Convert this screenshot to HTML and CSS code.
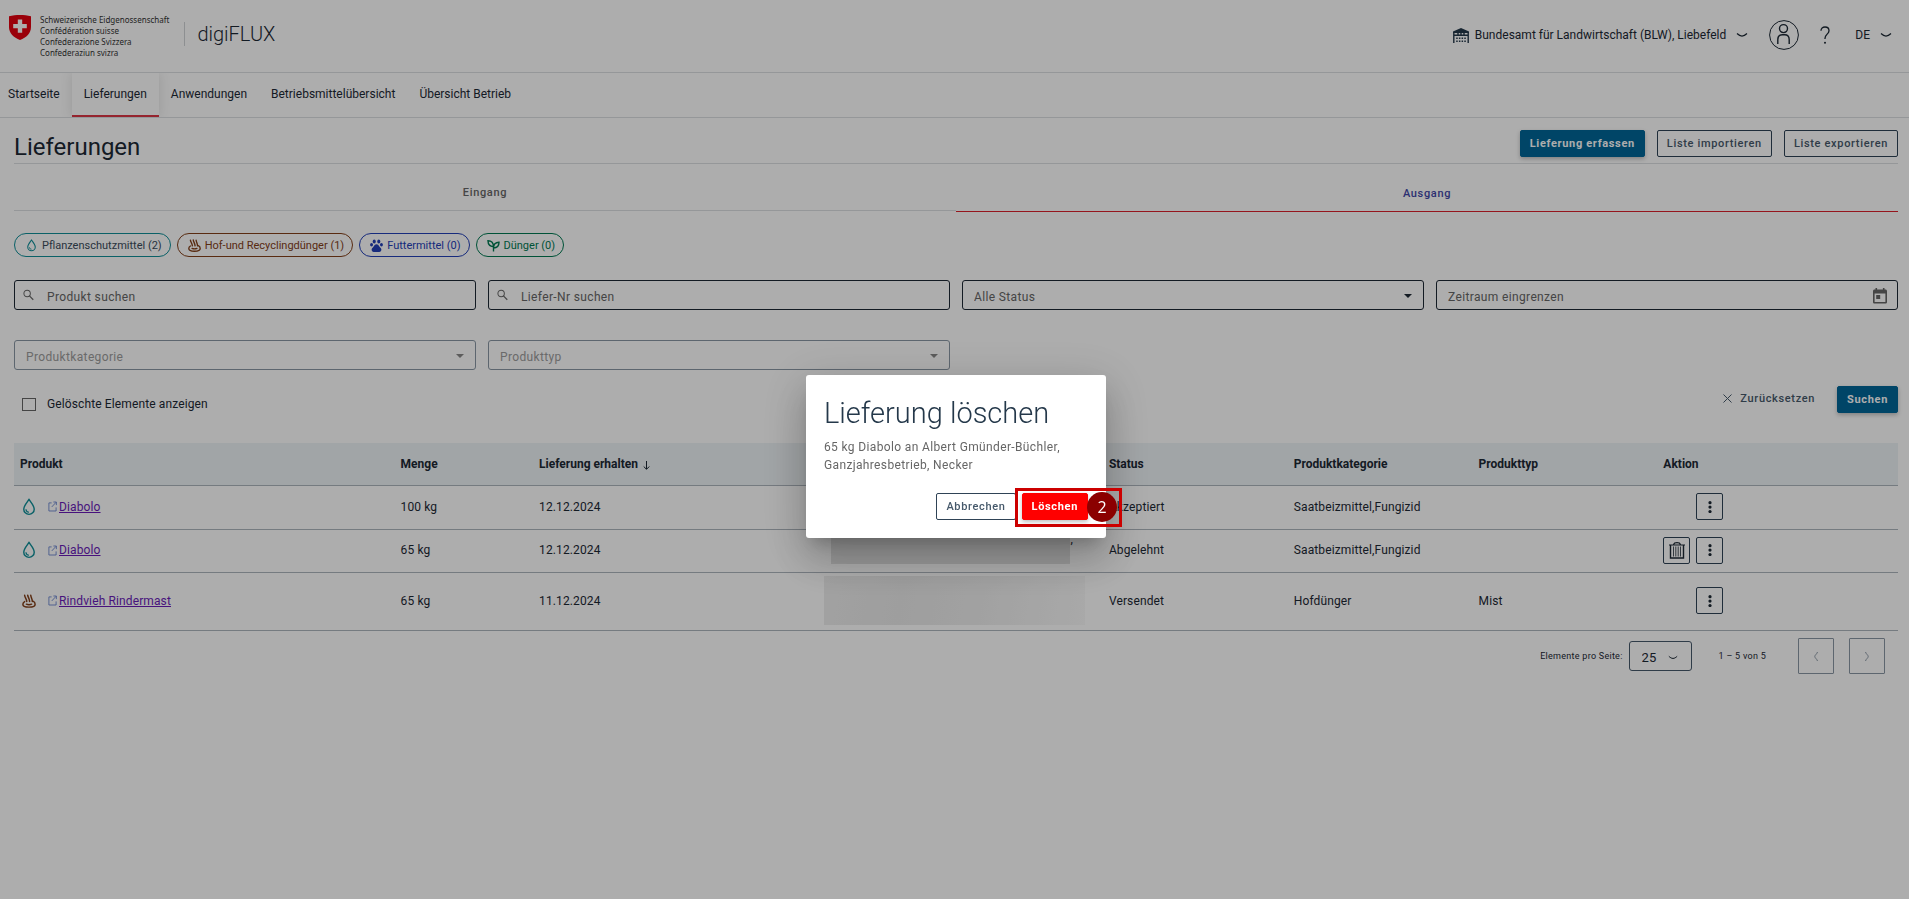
FILE: index.html
```html
<!DOCTYPE html>
<html lang="de">
<head>
<meta charset="utf-8">
<title>digiFLUX – Lieferungen</title>
<link rel="stylesheet" href="styles.css">
</head>
<body>
<svg class="defs" aria-hidden="true">
  <symbol id="drop" viewBox="0 0 16 20"><path d="M8 1.6C5.8 4.8 2.2 8.6 2.2 12.4a5.8 5.8 0 0 0 11.6 0C13.800 8.600 10.200 4.800 8 1.600z" fill="none" stroke="currentColor" stroke-width="1.600"/><path d="M4.600 12.600a3.400 3.400 0 0 0 3.400 3.200" fill="none" stroke="currentColor" stroke-width="1.300"/></symbol>
  <symbol id="manure" viewBox="0 0 16 16"><g fill="none" stroke="currentColor" stroke-width="1.700" stroke-linecap="round"><path d="M3 1.500c.2 2.400 2.200 3.600 2.400 7M6.500 1.300c.2 2.400 2 3.800 2.200 7.200M10 1.500c.2 2.400 1.600 3.600 1.800 7"/><path d="M3 8.600C1.600 9.400 1 10.600 1 11.600 1 14 3.600 15 8 15s7-1 7-3.400c0-1.600-.9-2.800-2.400-3.400"/><path d="M5 11.600c1.600.6 4.400.6 6 0"/></g></symbol>
  <symbol id="paw" viewBox="0 0 16 16"><g fill="currentColor"><ellipse cx="5.200" cy="3" rx="1.900" ry="2.500"/><ellipse cx="10.800" cy="3" rx="1.900" ry="2.500"/><ellipse cx="1.900" cy="7" rx="1.800" ry="2.100"/><ellipse cx="14.100" cy="7" rx="1.800" ry="2.100"/><path d="M8 6.600c-2 0-2.700 1.800-4 3.100-1.200 1.200-2 2-2 3.500S3 16 4.600 16h6.800c1.600 0 2.600-1.300 2.600-2.800s-.8-2.300-2-3.500c-1.300-1.300-2-3.100-4-3.100z"/></g></symbol>
  <symbol id="sprout" viewBox="0 0 16 16"><g fill="none" stroke="currentColor" stroke-width="1.700"><path d="M8 15.500V9.500M8 9.500C3.800 9.300 1.300 7 1.200 2.200 5.800 2.200 8 4.800 8 9.500zM8 11c0-4.500 2.200-6.800 6.800-7C14.800 8.200 12.600 10.800 8 11z"/></g></symbol>
  <symbol id="chevron" viewBox="0 0 12 6"><path d="M1 1.500c1.600 1.500 3.200 2.600 5 2.600s3.400-1.100 5-2.600" fill="none" stroke="currentColor" stroke-width="1.200"/></symbol>
  <symbol id="search" viewBox="0 0 12 12"><ellipse cx="4.500" cy="4.300" rx="3.500" ry="3.600" fill="none" stroke="currentColor" stroke-width="1.100"/><path d="M7 7l4.200 4.200" stroke="currentColor" stroke-width="1.300"/></symbol>
  <symbol id="external" viewBox="0 0 10 12"><path d="M4 2H1v9h8V7M6 1h3.300v3.500M9 1.300L4.200 6.500" fill="none" stroke="currentColor"/></symbol>
  <symbol id="caret" viewBox="0 0 8 4"><path d="M0 0h8L4 4z" fill="currentColor"/></symbol>
  <symbol id="dots" viewBox="0 0 4 12"><g fill="currentColor"><circle cx="2" cy="1.700" r="1.600"/><circle cx="2" cy="6.100" r="1.600"/><circle cx="2" cy="10.500" r="1.600"/></g></symbol>
</svg>

<header class="header">
  <a class="brand" href="#">
    <svg class="shield" viewBox="0 0 22 25"><path d="M0 1.200C3.500.3 7.300 0 11 0s7.500.3 11 1.200V12c0 6-4.600 10.700-11 13C4.600 22.700 0 18 0 12z" fill="#e3000f"/><path d="M8.800 4.500h4.400v4.400h4.600v4.300h-4.600v4.500H8.800v-4.500H4.200V8.900h4.600z" fill="#fff"/></svg>
    <span class="brand-names">Schweizerische Eidgenossenschaft<br>Confédération suisse<br>Confederazione Svizzera<br>Confederaziun svizra</span>
    <span class="app-name">digiFLUX</span>
  </a>
  <div class="account">
    <button class="plain org" type="button">
      <svg class="farm" viewBox="0 0 16 15"><path d="M8 0l8 3.600V5H0V3.600z" fill="currentColor"/><path d="M.8 4v11M15.200 4v11M.8 7.200h14.400M5 4v3M11 4v3M8 4v3" fill="none" stroke="currentColor" stroke-width="1.400"/><path d="M3.200 10.200h10M3.200 13.200h10" stroke="currentColor" stroke-width="1.500" stroke-dasharray="1.500 1.200"/></svg>
      Bundesamt für Landwirtschaft (BLW), Liebefeld
      <svg class="chev"><use href="#chevron"/></svg>
    </button>
    <button class="plain" type="button" aria-label="Profil"><svg class="avatar" viewBox="0 0 30 30" fill="none" stroke="currentColor"><circle cx="15" cy="15" r="14.400"/><circle cx="14.500" cy="8.600" r="4" stroke-width="1.400"/><path d="M8.800 24v-4.300c0-3 2-4.900 4.500-4.900h2.400c2.500 0 4.500 1.900 4.500 4.900V24" stroke-width="1.400"/></svg></button>
    <button class="plain" type="button" aria-label="Hilfe"><svg class="help" viewBox="0 0 10 18"><path d="M1 4.800C1 2.400 2.700 1 5 1s4 1.400 4 3.700c0 3.300-4 3.700-4 7.600v.7" fill="none" stroke="currentColor" stroke-width="1.300"/><circle cx="5" cy="16.800" r="1" fill="currentColor"/></svg></button>
    <button class="plain lang" type="button">DE <svg class="chev"><use href="#chevron"/></svg></button>
  </div>
</header>

<nav class="nav">
  <a href="#">Startseite</a>
  <a href="#" class="active" aria-current="page">Lieferungen</a>
  <a href="#">Anwendungen</a>
  <a href="#">Betriebsmittelübersicht</a>
  <a href="#">Übersicht Betrieb</a>
</nav>

<main class="main">
  <div class="title-row">
    <h1>Lieferungen</h1>
    <div class="actions">
      <button class="btn primary" type="button">Lieferung erfassen</button>
      <button class="btn" type="button">Liste importieren</button>
      <button class="btn" type="button">Liste exportieren</button>
    </div>
  </div>

  <div class="tabs" role="tablist">
    <button type="button" role="tab">Eingang</button>
    <button type="button" role="tab" class="selected" aria-selected="true">Ausgang</button>
  </div>

  <div class="chips">
    <button type="button" class="chip teal"><svg><use href="#drop"/></svg><span>Pflanzenschutzmittel (2)</span></button>
    <button type="button" class="chip brown"><svg><use href="#manure"/></svg><span>Hof-und Recyclingdünger (1)</span></button>
    <button type="button" class="chip blue"><svg><use href="#paw"/></svg><span>Futtermittel (0)</span></button>
    <button type="button" class="chip green"><svg><use href="#sprout"/></svg><span>Dünger (0)</span></button>
  </div>

  <form class="filters">
    <div class="fields">
      <div class="field search"><svg class="lens"><use href="#search"/></svg><input type="text" placeholder="Produkt suchen" aria-label="Produkt suchen"></div>
      <div class="field search"><svg class="lens"><use href="#search"/></svg><input type="text" placeholder="Liefer-Nr suchen" aria-label="Liefer-Nr suchen"></div>
      <div class="field"><select aria-label="Status"><option>Alle Status</option></select><svg class="caret"><use href="#caret"/></svg></div>
      <div class="field"><input type="text" placeholder="Zeitraum eingrenzen" aria-label="Zeitraum eingrenzen"><svg class="calendar" viewBox="0 0 14 16"><path d="M2.500 0h1.600v1.600h5.800V0h1.600v1.600h.9c.9 0 1.600.7 1.600 1.500v10.800c0 .9-.7 1.600-1.600 1.600H1.600C.7 15.500 0 14.800 0 13.900V3.100c0-.8.7-1.500 1.600-1.500h.9zM1.600 5.400v8.500h10.800V5.400zM3.200 7h4v4h-4z" fill="currentColor" fill-rule="evenodd"/></svg></div>
      <div class="field off"><select aria-label="Produktkategorie" disabled><option>Produktkategorie</option></select><svg class="caret"><use href="#caret"/></svg></div>
      <div class="field off"><select aria-label="Produkttyp" disabled><option>Produkttyp</option></select><svg class="caret"><use href="#caret"/></svg></div>
    </div>
    <div class="filter-foot">
      <label class="check"><input type="checkbox">Gelöschte Elemente anzeigen</label>
      <div class="filter-actions">
        <button class="plain reset" type="reset"><svg viewBox="0 0 9 9"><path d="M.5.5l8 8M8.500.5l-8 8" stroke="currentColor"/></svg>Zurücksetzen</button>
        <button class="btn primary" type="button">Suchen</button>
      </div>
    </div>
  </form>

  <table class="list">
    <colgroup><col class="c-product"><col class="c-amount"><col class="c-date"><col class="c-receiver"><col class="c-std"><col class="c-std"><col class="c-std"><col></colgroup>
    <thead>
      <tr><th>Produkt</th><th>Menge</th><th>Lieferung erhalten <svg class="sort" viewBox="0 0 7 9"><path d="M3.500 0v8M.7 5.500l2.800 2.800 2.800-2.800" fill="none" stroke="currentColor"/></svg></th><th></th><th>Status</th><th>Produktkategorie</th><th>Produkttyp</th><th>Aktion</th></tr>
    </thead>
    <tbody>
      <tr class="r1">
        <td><div class="product"><svg class="kind teal"><use href="#drop"/></svg><svg class="ext"><use href="#external"/></svg><a href="#">Diabolo</a></div></td>
        <td>100 kg</td><td>12.12.2024</td><td></td><td>Akzeptiert</td><td>Saatbeizmittel,Fungizid</td><td></td>
        <td><div class="tools"><button class="square" type="button" aria-label="Mehr"><svg class="dots"><use href="#dots"/></svg></button></div></td>
      </tr>
      <tr class="r2">
        <td><div class="product"><svg class="kind teal"><use href="#drop"/></svg><svg class="ext"><use href="#external"/></svg><a href="#">Diabolo</a></div></td>
        <td>65 kg</td><td>12.12.2024</td><td class="masked"><div class="mask-row"><span class="mask dark"></span>,</div></td><td>Abgelehnt</td><td>Saatbeizmittel,Fungizid</td><td></td>
        <td><div class="tools"><button class="square" type="button" aria-label="Löschen"><svg class="trash" viewBox="0 0 16 17" fill="none" stroke="currentColor"><path d="M0 3h16M4.500 2.500C5 1 6 .7 8 .7s3 .3 3.500 1.800" stroke-width="1.200"/><path d="M1.500 3v13h13V3" stroke-width="1.400"/><path d="M4.500 4.500v10M6.800 4.500v10M9.200 4.500v10M11.500 4.500v10" stroke-width=".8"/></svg></button><button class="square" type="button" aria-label="Mehr"><svg class="dots"><use href="#dots"/></svg></button></div></td>
      </tr>
      <tr class="r3">
        <td><div class="product"><svg class="kind brown small"><use href="#manure"/></svg><svg class="ext"><use href="#external"/></svg><a href="#">Rindvieh Rindermast</a></div></td>
        <td>65 kg</td><td>11.12.2024</td><td class="masked"><span class="mask"></span></td><td>Versendet</td><td>Hofdünger</td><td>Mist</td>
        <td><div class="tools"><button class="square" type="button" aria-label="Mehr"><svg class="dots"><use href="#dots"/></svg></button></div></td>
      </tr>
    </tbody>
  </table>

  <div class="pager">
    <label for="size">Elemente pro Seite:</label>
    <div class="size"><select id="size"><option>25</option></select><svg><use href="#chevron"/></svg></div>
    <span class="range">1 – 5 von 5</span>
    <button class="page" type="button" disabled aria-label="Vorherige Seite"><svg viewBox="0 0 4 9"><path d="M3.500 0C3 2 .8 3 .8 4.500S3 7 3.500 9" fill="none" stroke="currentColor"/></svg></button>
    <button class="page" type="button" disabled aria-label="Nächste Seite"><svg viewBox="0 0 4 9"><path d="M.5 0c.5 2 2.700 3 2.700 4.500S1 7 .5 9" fill="none" stroke="currentColor"/></svg></button>
  </div>
</main>

<div class="overlay">
  <section class="dialog" role="dialog" aria-labelledby="dialog-title">
    <h2 id="dialog-title">Lieferung löschen</h2>
    <p>65 kg Diabolo an Albert Gmünder-Büchler, Ganzjahresbetrieb, Necker</p>
    <div class="dialog-actions">
      <button class="btn" type="button">Abbrechen</button>
      <div class="marked">
        <button class="btn danger" type="button">Löschen</button>
        <div class="marker"><span>2</span></div>
      </div>
    </div>
  </section>
</div>
</body>
</html>
```
FILE: styles.css
```css
* { box-sizing: border-box; }

body {
  margin: 0;
  background: #fff;
  color: #1c2834;
  font: 12px/18px Roboto, "Liberation Sans", sans-serif;
}

button, input, select { font: inherit; color: inherit; }
button { cursor: pointer; }
svg { display: block; flex: none; }
.defs { position: absolute; width: 0; height: 0; }

.plain {
  display: flex;
  align-items: center;
  padding: 0;
  border: 0;
  background: none;
}

/* Header */
.header {
  display: flex;
  justify-content: space-between;
  align-items: flex-start;
  height: 73px;
  padding: 0 17px 0 9px;
  border-bottom: 1px solid #dcdfe2;
}
.brand { display: flex; padding-top: 14px; color: inherit; text-decoration: none; }
.shield { width: 22px; height: 25px; margin-top: 1px; }
.brand-names {
  margin-left: 9px;
  font: 8px/11px "Noto Sans", sans-serif;
  color: #333;
}
.app-name {
  align-self: flex-start;
  margin: 8px 0 0 15px;
  padding-left: 12px;
  border-left: 1px solid #d0d3d6;
  font-size: 20px;
  font-weight: 300;
  line-height: 24px;
}
.account { display: flex; align-items: center; padding-top: 20px; height: 50px; }
.org { gap: 6px; margin-right: 21px; }
.farm { width: 16px; height: 15px; color: #24384a; }
.chev { width: 12px; height: 6px; margin-left: 4px; }
.avatar { width: 30px; height: 30px; }
.help { width: 10px; height: 18px; margin: 0 25px 0 21px; }
.lang { gap: 6px; }

/* Main navigation */
.nav { display: flex; height: 45px; border-bottom: 1px solid #dcdfe2; }
.nav a {
  padding: 12px 12px 0;
  color: inherit;
  text-decoration: none;
}
.nav a:first-child { padding-left: 8px; }
.nav .active {
  border-bottom: 2px solid #dc3545;
  box-shadow: 0 0 12px rgba(0, 0, 0, .12);
  clip-path: inset(0 -12px 0 -12px);
}

/* Page */
.main { padding: 12px 11px 12px 14px; }
.title-row {
  display: flex;
  justify-content: space-between;
  align-items: flex-start;
  height: 34px;
  border-bottom: 1px solid #dcdfe2;
}
h1 { margin: 0; font-size: 24px; font-weight: 400; line-height: 35px; }
.actions { display: flex; gap: 12px; }

.btn {
  height: 27px;
  padding: 0 9px;
  border: 1px solid #2f4356;
  border-radius: 2px;
  background: none;
  color: #46596b;
  font-size: 11px;
  font-weight: 500;
  line-height: 20px;
  letter-spacing: .06em;
}
.primary, .danger {
  border-color: #006699;
  background: #006699;
  color: #fff;
  font-weight: 700;
  box-shadow: 0 2px 4px rgba(0, 0, 0, .25);
}
.danger { border-color: #f00; background: #f00; }

.tabs { display: flex; }
.tabs button {
  flex: 1;
  height: 47px;
  padding: 12px 0 0;
  border: 0;
  border-bottom: 1px solid #dcdfe2;
  background: none;
  color: #666;
  font-size: 11px;
  font-weight: 500;
  letter-spacing: .06em;
}
.tabs .selected { height: 48px; border-color: #dc1f2b; color: #4248a8; }

.chips { display: flex; gap: 6px; margin-top: 21px; }
.chip {
  display: flex;
  align-items: center;
  gap: 4px;
  height: 24px;
  padding: 1px 8px 0 10px;
  border: 1px solid;
  border-radius: 12px;
  background: none;
  font-size: 11px;
}
.chip svg { width: 13px; height: 13px; }
.teal { color: #0f8f99; }
.chip.teal span { color: #3b4c5c; }
.brown { color: #83401a; }
.blue { color: #2340b8; }
.green { color: #007a52; }

/* Filters */
.fields {
  display: grid;
  grid-template-columns: repeat(4, 1fr);
  gap: 30px 12px;
  margin-top: 23px;
}
.field {
  display: flex;
  align-items: center;
  height: 30px;
  padding-right: 11px;
  border: 1px solid #1c2834;
  border-radius: 3px;
  color: #666;
}
.field input, .field select {
  flex: 1;
  min-width: 0;
  height: 100%;
  padding: 4px 11px 0;
  border: 0;
  background: none;
  outline: 0;
  appearance: none;
  letter-spacing: .03em;
}
.field input::placeholder { color: inherit; opacity: 1; }
.search input { padding-left: 13px; }
.field select:disabled { color: inherit; opacity: 1; }
.lens { width: 11px; height: 12px; margin-left: 8px; }
.caret { width: 8px; height: 4px; margin-top: 2px; color: #1c2834; }
.calendar { width: 14px; height: 16px; margin: 2px -1px 0 0; }
.off { border-color: #8a97a4; color: #9c9c9c; }
.off .caret { color: #888; }

.filter-foot {
  display: flex;
  justify-content: space-between;
  align-items: flex-end;
  margin-top: 16px;
}
.check {
  display: flex;
  align-items: center;
  gap: 11px;
  padding-left: 8px;
  letter-spacing: .01em;
}
.check input {
  width: 14px;
  height: 13px;
  margin: 0;
  border: 1px solid #666;
  appearance: none;
}
.filter-actions { display: flex; gap: 22px; }
.reset {
  gap: 8px;
  padding-bottom: 2px;
  color: #46596b;
  font-size: 11px;
  font-weight: 500;
  letter-spacing: .06em;
}
.reset svg { width: 9px; height: 9px; }

/* List */
.list {
  width: 100%;
  margin-top: 30px;
  border-spacing: 0;
  table-layout: fixed;
}
.c-product { width: 20.200%; }
.c-amount { width: 7.350%; }
.c-date { width: 15.150%; }
.c-receiver { width: 15.100%; }
.c-std { width: 9.810%; }
.list th, .list td {
  height: 44px;
  padding: 0 6px;
  border-bottom: 1px solid #adb5bd;
  text-align: left;
}
.list td { padding-bottom: 2px; letter-spacing: .01em; }
.list th { height: 43px; background: #eef3f6; font-weight: 700; }
.list .r2 td { height: 43px; }
.list .r3 td { height: 58px; }
.sort { display: inline-block; width: 7px; height: 9px; margin-left: 2px; vertical-align: -2px; }
.product { display: flex; align-items: center; }
.product a { color: #6a1bb8; }
.kind { width: 16px; height: 18px; margin-left: 1px; }
.small { height: 14px; }
.ext { width: 9px; height: 11px; margin: 0 2px 0 11px; color: #6b86d0; }
.tools { display: flex; justify-content: flex-end; gap: 6px; width: 60px; }
.square {
  display: grid;
  place-items: center;
  width: 27px;
  height: 27px;
  padding: 0;
  border: 1px solid #2f4356;
  border-radius: 2px;
  background: none;
}
.dots { width: 4px; height: 12px; }
.trash { width: 16px; height: 17px; }
.mask {
  display: block;
  width: 261px;
  height: 49px;
  background: linear-gradient(100deg, #eee, #e9e9e9 30%, #eee 60%, #f9f9f9);
}
.mask-row { display: flex; margin-left: 7px; padding-bottom: 6px; }
.mask.dark { width: 239px; height: 34px; background: #e2e2e2; }

/* Pager */
.pager {
  display: flex;
  justify-content: flex-end;
  align-items: center;
  padding: 7px 13px 0 0;
  font-size: 9px;
  letter-spacing: .03em;
}
.size { display: flex; align-items: center; position: relative; margin: 0 27px 0 6px; }
.size select {
  width: 63px;
  height: 30px;
  padding: 3px 12px 0;
  border: 1px solid #46596b;
  border-radius: 3px;
  background: none;
  appearance: none;
  font-size: 13px;
}
.size svg { position: absolute; right: 14px; top: 14px; width: 10px; height: 5px; }
.page {
  display: grid;
  place-items: center;
  width: 36px;
  height: 36px;
  margin-left: 15px;
  padding: 0;
  border: 1px solid #8a97a4;
  border-radius: 1px;
  background: none;
  color: #8a97a4;
}
.range + .page { margin-left: 32px; }
.page svg { width: 4px; height: 9px; }

/* Dialog */
.overlay {
  position: fixed;
  inset: 0;
  display: flex;
  justify-content: center;
  align-items: center;
  padding: 14px 0 0 3px;
  background: rgba(0, 0, 0, .32);
}
.dialog {
  width: 300px;
  padding: 18px;
  border-radius: 3px;
  background: #fff;
  box-shadow: 0 11px 15px -7px rgba(0, 0, 0, .2), 0 24px 38px 3px rgba(0, 0, 0, .14), 0 9px 46px 8px rgba(0, 0, 0, .12);
}
.dialog h2 {
  margin: 0;
  color: #24384a;
  font-size: 29px;
  font-weight: 300;
  line-height: 40px;
}
.dialog p { margin: 5px 0 0; color: #666; letter-spacing: .03em; }
.dialog-actions { display: flex; justify-content: flex-end; gap: 6px; margin-top: 19px; }
.marked { position: relative; }
.marker {
  position: absolute;
  inset: -5px -34px -7px -7px;
  display: flex;
  justify-content: flex-end;
  align-items: center;
  padding-bottom: 2px;
  border: 3px solid #c00;
  pointer-events: none;
}
.marker span {
  width: 30px;
  height: 30px;
  margin-right: 2px;
  border-radius: 50%;
  background: #8b0000;
  color: #fff;
  font: 16px/30px "Open Sans", sans-serif;
  text-align: center;
}
```
